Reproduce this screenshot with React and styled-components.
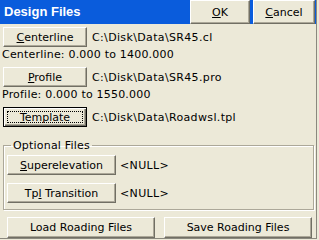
import React from 'react';
import styled, { createGlobalStyle, css } from 'styled-components';

const Global = createGlobalStyle`
  html, body { margin: 0; padding: 0; background: #ECE9D8; }
  body { font-family: "DejaVu Sans", Tahoma, sans-serif; font-size: 11px; color: #000; }
  #root { width: 319px; height: 240px; }
`;

const Dialog = styled.div`
  width: 317px;
  height: 239px;
  box-sizing: border-box;
  background: #ECE9D8;
  border-right: 1px solid #8a887e;
  border-bottom: 1px solid #8a887e;
  display: flex;
  flex-direction: column;
`;

const TitleBar = styled.div`
  height: 24px;
  background: #0A5CDC;
  display: flex;
  align-items: stretch;
  gap: 3px;
  padding-right: 1px;
`;

const Title = styled.div`
  flex: 1;
  color: #fff;
  font-family: "Liberation Sans", Arial, sans-serif;
  font-weight: bold;
  font-size: 13px;
  line-height: 24px;
  padding-left: 4px;
`;

const Btn = styled.button`
  box-sizing: border-box;
  margin: 0;
  padding: 0;
  font-family: "DejaVu Sans", Tahoma, sans-serif;
  font-size: 11px;
  color: #000;
  background: #ECE9D8;
  border-style: solid;
  border-width: 1px;
  border-color: #fff #716F64 #716F64 #fff;
  box-shadow: inset -1px -1px 0 #ACA899;
  width: ${p => p.$w}px;
  height: ${p => p.$h || 20}px;
  display: flex;
  align-items: center;
  justify-content: center;
  position: relative;
  white-space: pre;
  ${p => p.$default && css`
    border: 1px solid #000;
    box-shadow: inset 1px 1px 0 #fff, inset -1px -1px 0 #716F64, inset -2px -2px 0 #ACA899;
    &::after {
      content: "";
      position: absolute;
      inset: 3px;
      border: 1px dotted #000;
    }
  `}
`;

const Label = styled.span`
  white-space: pre;
`;

const U = styled.span`
  text-decoration: underline;
`;

const Content = styled.div`
  display: flex;
  flex-direction: column;
  padding: 3px 0 0 3px;
`;

const Section = styled.div`
  display: flex;
  flex-direction: column;
  gap: 1px;
  margin-bottom: ${p => p.$mb || 0}px;
`;

const Row = styled.div`
  display: flex;
  align-items: center;
  gap: ${p => p.$gap || 5}px;
`;

const PathText = styled.span`
  white-space: nowrap;
  letter-spacing: 0.35px;
`;

const RangeText = styled.div`
  line-height: 14px;
  margin-left: -1px;
  letter-spacing: 0.2px;
  white-space: nowrap;
`;

const Group = styled.fieldset`
  margin: 12px 0 0 0;
  width: 311px;
  box-sizing: border-box;
  height: 71px;
  border: 1px solid #ACA899;
  box-shadow: inset 1px 1px 0 #fff, 1px 1px 0 #fff;
  padding: 3px 0 0 3px;
  display: flex;
  flex-direction: column;
  gap: 8px;
`;

const Legend = styled.legend`
  padding: 0 2px;
  margin-left: 4px;
  line-height: 13px;
  letter-spacing: 0.2px;
`;

const Footer = styled.div`
  display: flex;
  gap: 9px;
  padding-left: 4px;
  margin-top: 7px;
`;

export default function App() {
  return (
    <>
      <Global />
      <Dialog>
        <TitleBar>
          <Title>Design Files</Title>
          <Btn $w={60} $h={24}><Label><U>O</U>K</Label></Btn>
          <Btn $w={62} $h={24}><Label><U>C</U>ancel</Label></Btn>
        </TitleBar>
        <Content>
          <Section $mb={5}>
            <Row>
              <Btn $w={84}><Label><U>C</U>enterline</Label></Btn>
              <PathText>C:\Disk\Data\SR45.cl</PathText>
            </Row>
            <RangeText>Centerline: 0.000 to 1400.000</RangeText>
          </Section>
          <Section $mb={5}>
            <Row>
              <Btn $w={84}><Label><U>P</U>rofile</Label></Btn>
              <PathText>C:\Disk\Data\SR45.pro</PathText>
            </Row>
            <RangeText>Profile: 0.000 to 1550.000</RangeText>
          </Section>
          <Section>
            <Row>
              <Btn $w={84} $default><Label><U>T</U>emplate</Label></Btn>
              <PathText>C:\Disk\Data\Roadwsl.tpl</PathText>
            </Row>
          </Section>
          <Group>
            <Legend>Optional Files</Legend>
            <Row $gap={4}>
              <Btn $w={109}><Label><U>S</U>uperelevation</Label></Btn>
              <PathText>&lt;NULL&gt;</PathText>
            </Row>
            <Row $gap={4}>
              <Btn $w={109}><Label>Tp<U>l</U> Transition</Label></Btn>
              <PathText>&lt;NULL&gt;</PathText>
            </Row>
          </Group>
          <Footer>
            <Btn $w={148} $h={21}><Label>Load Roading Files</Label></Btn>
            <Btn $w={148} $h={21}><Label>Save Roading Files</Label></Btn>
          </Footer>
        </Content>
      </Dialog>
    </>
  );
}
